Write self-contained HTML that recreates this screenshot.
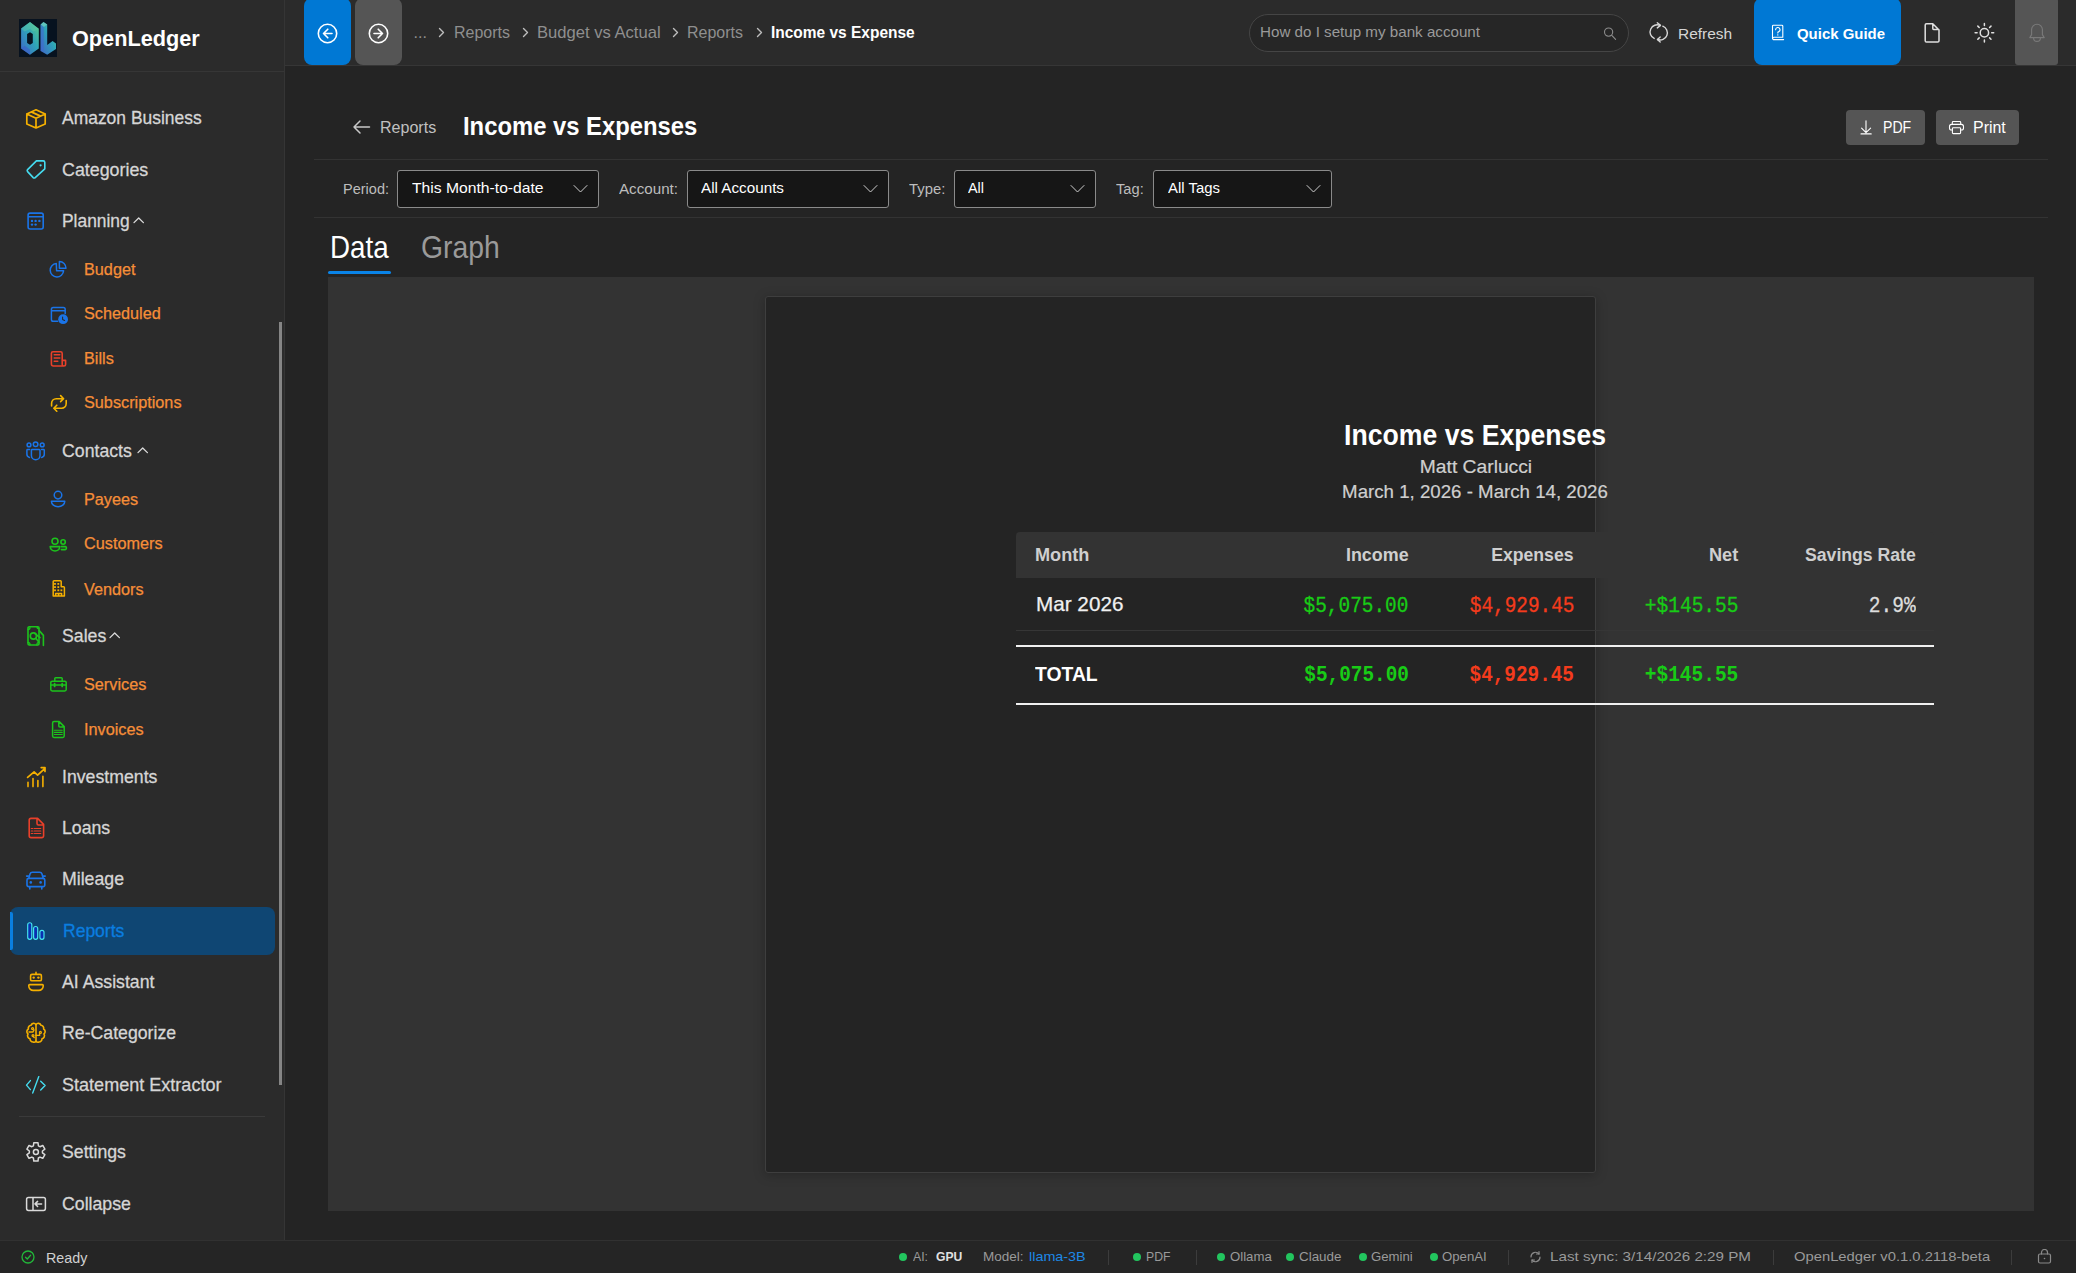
<!DOCTYPE html>
<html><head><meta charset="utf-8"><style>
html,body{margin:0;padding:0;width:2076px;height:1273px;overflow:hidden;background:#242424}
.t{position:absolute;white-space:nowrap}
svg{display:block}
</style></head><body>
<div style="position:absolute;left:0px;top:0px;width:2076px;height:1273px;background:#242424"></div>
<div style="position:absolute;left:0px;top:0px;width:284px;height:1240px;background:#2b2b2b"></div>
<div style="position:absolute;left:284px;top:0px;width:1px;height:1240px;background:#353535"></div>
<div style="position:absolute;left:0px;top:71px;width:284px;height:1px;background:#363636"></div>
<div style="position:absolute;left:285px;top:0px;width:1791px;height:65px;background:#2b2b2b"></div>
<div style="position:absolute;left:285px;top:65px;width:1791px;height:1px;background:#363636"></div>
<div style="position:absolute;left:0px;top:1240px;width:2076px;height:33px;background:#252525"></div>
<div style="position:absolute;left:0px;top:1240px;width:2076px;height:1px;background:#313131"></div>
<svg style="position:absolute;left:19px;top:19px;" width="38" height="38" viewBox="19 19 38 38" fill="none" stroke-linecap="round" stroke-linejoin="round"><rect x="19" y="19" width="38" height="38" fill="#07121f"/>
<defs><linearGradient id="lg" x1="0" y1="1" x2="1" y2="0"><stop offset="0" stop-color="#3f64c8"/><stop offset="0.55" stop-color="#2ea3b8"/><stop offset="1" stop-color="#5ad08a"/></linearGradient></defs>
<path d="M30 22.1 L38.8 28.7 L38.8 48.5 L30 54.8 L21.1 48.5 L21.1 28.4 Z M30 32.2 L32.8 34 L32.8 43 L30 44.7 L27.1 43 L27.1 34 Z" fill="url(#lg)" fill-rule="evenodd"/>
<path d="M21.1 28.4 L30 22.1 L38.8 28.7 L33.5 31.5 L30 29 L24.6 31.5 Z" fill="#5fc9a8" opacity="0.45"/>
<path d="M21.1 48.5 L24.6 45.8 L30 49.5 L30 54.8 Z" fill="#3a5fc8" opacity="0.6"/>
<path d="M43.5 22.1 L47.2 24.6 L47.2 45 L52.6 41 L56 43.5 L56 49.1 L47.2 54.8 L40.6 51 L40.6 24.6 Z" fill="url(#lg)"/>
<path d="M40.6 24.6 L43.5 22.1 L47.2 24.6 L43.8 27 Z" fill="#7fd8c0" opacity="0.6"/>
<path d="M40.6 24.6 L43.8 27 L43.8 50 L40.6 51 Z" fill="#3f6ad0" opacity="0.55"/>
</svg>
<div class="t" style="left:72.1px;top:23.74px;font:700 22.53px/29.29px 'Liberation Sans', sans-serif;color:#ffffff;transform:scaleX(0.9630);transform-origin:left">OpenLedger</div>
<div class="t" style="left:62.3px;top:106.02px;font:400 19.04px/24.75px 'Liberation Sans', sans-serif;color:#d6d6d6;-webkit-text-stroke:0.3px #d6d6d6;transform:scaleX(0.9171);transform-origin:left">Amazon Business</div>
<div class="t" style="left:62.3px;top:158.02px;font:400 19.04px/24.75px 'Liberation Sans', sans-serif;color:#d6d6d6;-webkit-text-stroke:0.3px #d6d6d6;transform:scaleX(0.9376);transform-origin:left">Categories</div>
<div class="t" style="left:62.3px;top:209.02px;font:400 19.04px/24.75px 'Liberation Sans', sans-serif;color:#d6d6d6;-webkit-text-stroke:0.3px #d6d6d6;transform:scaleX(0.9139);transform-origin:left">Planning</div>
<div class="t" style="left:62.3px;top:439.02px;font:400 19.04px/24.75px 'Liberation Sans', sans-serif;color:#d6d6d6;-webkit-text-stroke:0.3px #d6d6d6;transform:scaleX(0.93);transform-origin:left">Contacts</div>
<div class="t" style="left:62.3px;top:624.02px;font:400 19.04px/24.75px 'Liberation Sans', sans-serif;color:#d6d6d6;-webkit-text-stroke:0.3px #d6d6d6;transform:scaleX(0.93);transform-origin:left">Sales</div>
<div class="t" style="left:62.3px;top:765.02px;font:400 19.04px/24.75px 'Liberation Sans', sans-serif;color:#d6d6d6;-webkit-text-stroke:0.3px #d6d6d6;transform:scaleX(0.93);transform-origin:left">Investments</div>
<div class="t" style="left:62.3px;top:816.02px;font:400 19.04px/24.75px 'Liberation Sans', sans-serif;color:#d6d6d6;-webkit-text-stroke:0.3px #d6d6d6;transform:scaleX(0.93);transform-origin:left">Loans</div>
<div class="t" style="left:62.3px;top:867.02px;font:400 19.04px/24.75px 'Liberation Sans', sans-serif;color:#d6d6d6;-webkit-text-stroke:0.3px #d6d6d6;transform:scaleX(0.93);transform-origin:left">Mileage</div>
<div class="t" style="left:62.3px;top:970.02px;font:400 19.04px/24.75px 'Liberation Sans', sans-serif;color:#d6d6d6;-webkit-text-stroke:0.3px #d6d6d6;transform:scaleX(0.93);transform-origin:left">AI Assistant</div>
<div class="t" style="left:62.3px;top:1021.32px;font:400 19.04px/24.75px 'Liberation Sans', sans-serif;color:#d6d6d6;-webkit-text-stroke:0.3px #d6d6d6;transform:scaleX(0.93);transform-origin:left">Re-Categorize</div>
<div class="t" style="left:62.3px;top:1073.02px;font:400 19.04px/24.75px 'Liberation Sans', sans-serif;color:#d6d6d6;-webkit-text-stroke:0.3px #d6d6d6;transform:scaleX(0.9483);transform-origin:left">Statement Extractor</div>
<div class="t" style="left:62.3px;top:1140.02px;font:400 19.04px/24.75px 'Liberation Sans', sans-serif;color:#d6d6d6;-webkit-text-stroke:0.3px #d6d6d6;transform:scaleX(0.93);transform-origin:left">Settings</div>
<div class="t" style="left:62.3px;top:1192.02px;font:400 19.04px/24.75px 'Liberation Sans', sans-serif;color:#d6d6d6;-webkit-text-stroke:0.3px #d6d6d6;transform:scaleX(0.93);transform-origin:left">Collapse</div>
<svg style="position:absolute;left:131.5px;top:216.3px;" width="14" height="9" viewBox="131.5 216.3 14 9" fill="none" stroke-linecap="round" stroke-linejoin="round"><path d="M133.5 222.9 L138.2 218.3 L142.9 222.9" stroke="#dcdcdc" stroke-width="1.3" fill="none"/></svg>
<svg style="position:absolute;left:136.2px;top:446.1px;" width="14" height="9" viewBox="136.2 446.1 14 9" fill="none" stroke-linecap="round" stroke-linejoin="round"><path d="M138.2 452.70000000000005 L142.89999999999998 448.1 L147.6 452.70000000000005" stroke="#dcdcdc" stroke-width="1.3" fill="none"/></svg>
<svg style="position:absolute;left:107.5px;top:631.3px;" width="14" height="9" viewBox="107.5 631.3 14 9" fill="none" stroke-linecap="round" stroke-linejoin="round"><path d="M109.5 637.9 L114.2 633.3 L118.9 637.9" stroke="#dcdcdc" stroke-width="1.3" fill="none"/></svg>
<div class="t" style="left:83.7px;top:258.63px;font:400 16.42px/21.35px 'Liberation Sans', sans-serif;color:#f68e38;-webkit-text-stroke:0.25px #f68e38;transform:scaleX(0.99);transform-origin:left">Budget</div>
<div class="t" style="left:83.7px;top:303.43px;font:400 16.42px/21.35px 'Liberation Sans', sans-serif;color:#f68e38;-webkit-text-stroke:0.25px #f68e38;transform:scaleX(0.99);transform-origin:left">Scheduled</div>
<div class="t" style="left:83.7px;top:348.13px;font:400 16.42px/21.35px 'Liberation Sans', sans-serif;color:#f68e38;-webkit-text-stroke:0.25px #f68e38;transform:scaleX(0.99);transform-origin:left">Bills</div>
<div class="t" style="left:83.7px;top:392.23px;font:400 16.42px/21.35px 'Liberation Sans', sans-serif;color:#f68e38;-webkit-text-stroke:0.25px #f68e38;transform:scaleX(0.99);transform-origin:left">Subscriptions</div>
<div class="t" style="left:83.7px;top:489.23px;font:400 16.42px/21.35px 'Liberation Sans', sans-serif;color:#f68e38;-webkit-text-stroke:0.25px #f68e38;transform:scaleX(0.99);transform-origin:left">Payees</div>
<div class="t" style="left:83.7px;top:533.43px;font:400 16.42px/21.35px 'Liberation Sans', sans-serif;color:#f68e38;-webkit-text-stroke:0.25px #f68e38;transform:scaleX(0.99);transform-origin:left">Customers</div>
<div class="t" style="left:83.7px;top:578.63px;font:400 16.42px/21.35px 'Liberation Sans', sans-serif;color:#f68e38;-webkit-text-stroke:0.25px #f68e38;transform:scaleX(0.99);transform-origin:left">Vendors</div>
<div class="t" style="left:83.7px;top:673.63px;font:400 16.42px/21.35px 'Liberation Sans', sans-serif;color:#f68e38;-webkit-text-stroke:0.25px #f68e38;transform:scaleX(0.99);transform-origin:left">Services</div>
<div class="t" style="left:83.7px;top:719.23px;font:400 16.42px/21.35px 'Liberation Sans', sans-serif;color:#f68e38;-webkit-text-stroke:0.25px #f68e38;transform:scaleX(0.99);transform-origin:left">Invoices</div>
<div style="position:absolute;left:10px;top:907px;width:265px;height:48px;background:#0f4673;border-radius:8px"></div>
<div style="position:absolute;left:10px;top:912px;width:3px;height:38px;background:#0a7fe0;border-radius:0 2px 2px 0"></div>
<div class="t" style="left:62.5px;top:919.02px;font:400 19.04px/24.75px 'Liberation Sans', sans-serif;color:#0a7ee0;-webkit-text-stroke:0.3px #0a7ee0;transform:scaleX(0.9199);transform-origin:left">Reports</div>
<div style="position:absolute;left:19px;top:1116px;width:246px;height:1px;background:#3a3a3a"></div>
<div style="position:absolute;left:279px;top:322px;width:3px;height:763px;background:#858585"></div>
<svg style="position:absolute;left:0px;top:0px;" width="285" height="1240" viewBox="0 0 285 1240" fill="none" stroke-linecap="round" stroke-linejoin="round"><path d="M36 109.8 L45.2 114 L45.2 124 L36 128 L26.8 124 L26.8 114 Z M26.8 114 L36 118.3 L45.2 114 M36 118.3 V128 M31.2 111.9 L40.6 116.1" stroke="#f5b000" stroke-width="1.7" fill="none"/><path d="M36.4 160.9 H43.2 a1.6 1.6 0 0 1 1.6 1.6 V168.8 L35.2 177.6 a1.4 1.4 0 0 1 -2 0 L27.6 171.6 a1.4 1.4 0 0 1 0 -2 Z" stroke="#45dcf0" stroke-width="1.6" fill="none"/><circle cx="40.6" cy="165.3" r="1.1" stroke="none" fill="#45dcf0"/><path d="M30.1 213.1 H41.2 a2 2 0 0 1 2 2 V227 a2 2 0 0 1 -2 2 H30.1 a2 2 0 0 1 -2 -2 V215.1 a2 2 0 0 1 2 -2 Z M28.1 216.8 H43.2" stroke="#1a74e8" stroke-width="1.6" fill="none"/><circle cx="32" cy="220.9" r="1.2" stroke="none" fill="#1a74e8"/><circle cx="35.6" cy="220.9" r="1.2" stroke="none" fill="#1a74e8"/><circle cx="39.4" cy="220.9" r="1.2" stroke="none" fill="#1a74e8"/><circle cx="32" cy="224.6" r="1.2" stroke="none" fill="#1a74e8"/><circle cx="35.6" cy="224.6" r="1.2" stroke="none" fill="#1a74e8"/><circle cx="35.6" cy="444.3" r="2.3" stroke="#1a74e8" stroke-width="1.5" fill="none"/><circle cx="29" cy="444.9" r="1.9" stroke="#1a74e8" stroke-width="1.5" fill="none"/><circle cx="42.2" cy="444.9" r="1.9" stroke="#1a74e8" stroke-width="1.5" fill="none"/><path d="M32 449.6 H39.2 a0.8 0.8 0 0 1 0.8 0.8 V455.5 a4.3 4.3 0 0 1 -8.6 0 V450.4 a0.8 0.8 0 0 1 0.6 -0.8 Z" stroke="#1a74e8" stroke-width="1.5" fill="none"/><path d="M29.6 449.6 H27.6 a0.7 0.7 0 0 0 -0.7 0.7 V454.3 a3.2 3.2 0 0 0 2.6 3.1" stroke="#1a74e8" stroke-width="1.5" fill="none"/><path d="M41.6 449.6 H43.6 a0.7 0.7 0 0 1 0.7 0.7 V454.3 a3.2 3.2 0 0 1 -2.6 3.1" stroke="#1a74e8" stroke-width="1.5" fill="none"/><path d="M29.2 626.8 H37.8 a1.2 1.2 0 0 1 1.2 1.2 V643.8 a1.2 1.2 0 0 1 -1.2 1.2 H29.2 a1.2 1.2 0 0 1 -1.2 -1.2 V628 a1.2 1.2 0 0 1 1.2 -1.2 Z" stroke="#1cc41c" stroke-width="1.6" fill="none"/><path d="M28 629.6 a2 2 0 0 0 2 -2 M37 626.8 a2 2 0 0 0 2 2 M28 642.4 a2 2 0 0 1 2 2.4 M37 645 a2 2 0 0 1 2 -2.6" stroke="#1cc41c" stroke-width="1.3" fill="none"/><circle cx="33.4" cy="636" r="3.1" stroke="#1cc41c" stroke-width="1.6" fill="none"/><path d="M39.2 630.6 L43.4 635.4 V645.4" stroke="#1cc41c" stroke-width="1.6" fill="none"/><path d="M34.6 633.4 L40 637.6 M36.2 638.8 L38.6 641.8" stroke="#1cc41c" stroke-width="1.6" fill="none"/><path d="M27.6 777.4 L34.1 771.8 L37.6 775.2 L44.4 768.8 M41.2 767.6 H45 V771.4" stroke="#f5b000" stroke-width="1.7" fill="none"/><path d="M28 782.2 V786.6 M33 778.6 V786.6 M37.9 780.6 V786.6 M42.9 776.2 V786.6" stroke="#f5b000" stroke-width="1.6" fill="none"/><path d="M31 818.4 H37.6 L43.6 824.4 V835.8 a1.8 1.8 0 0 1 -1.8 1.8 H31 a1.8 1.8 0 0 1 -1.8 -1.8 V820.2 a1.8 1.8 0 0 1 1.8 -1.8 Z M37 818.6 V823.6 a1.4 1.4 0 0 0 1.4 1.4 H43.4" stroke="#e8402a" stroke-width="1.6" fill="none"/><path d="M31.2 828.5 H32.8 M34.2 828.5 H40.8 M31.2 831 H32.8 M34.2 831 H40.8 M31.2 833.5 H32.8 M34.2 833.5 H40.8" stroke="#e8402a" stroke-width="1.1" fill="none"/><path d="M28.8 878.4 L30 874 a2.6 2.6 0 0 1 2.4 -1.8 H39.6 a2.6 2.6 0 0 1 2.4 1.8 L43.2 878.4" stroke="#1a74e8" stroke-width="1.6" fill="none"/><path d="M28.6 878.4 H43.2 a1.6 1.6 0 0 1 1.6 1.6 V885 a1.6 1.6 0 0 1 -1.6 1.6 H28.6 a1.6 1.6 0 0 1 -1.6 -1.6 V880 a1.6 1.6 0 0 1 1.6 -1.6 Z" stroke="#1a74e8" stroke-width="1.6" fill="none"/><path d="M26.6 876.1 H28.4 M43.4 876.1 H45.2 M29.8 886.8 V889 M41.8 886.8 V889" stroke="#1a74e8" stroke-width="1.6" fill="none"/><circle cx="30.8" cy="882.4" r="1.3" stroke="none" fill="#1a74e8"/><circle cx="40.6" cy="882.4" r="1.3" stroke="none" fill="#1a74e8"/><g stroke="#45e6f0" stroke-width="1.15" fill="#0a2fb0"><rect x="27.7" y="922.7" width="4.1" height="16.6" rx="2.05"/><rect x="33.6" y="926.5" width="4.1" height="12.8" rx="2.05"/><rect x="39.9" y="930.3" width="4.1" height="9" rx="2.05"/></g><path d="M32 974.4 H40 a1.4 1.4 0 0 1 1.4 1.4 V979.4 a1.4 1.4 0 0 1 -1.4 1.4 H32 a1.4 1.4 0 0 1 -1.4 -1.4 V975.8 a1.4 1.4 0 0 1 1.4 -1.4 Z M36 972.4 V974.4" stroke="#f5b000" stroke-width="1.6" fill="none"/><circle cx="33.7" cy="977.6" r="1.2" stroke="none" fill="#f5b000"/><circle cx="38.4" cy="977.6" r="1.2" stroke="none" fill="#f5b000"/><path d="M29.6 984.6 H42.4 a0.8 0.8 0 0 1 0.8 0.8 V986 a4.4 4.4 0 0 1 -4.4 4.4 H33.2 a4.4 4.4 0 0 1 -4.4 -4.4 V985.4 a0.8 0.8 0 0 1 0.8 -0.8 Z" stroke="#f5b000" stroke-width="1.6" fill="none"/><path d="M36 1024.6 V1041.6 M36 1024.6 a2.8 2.8 0 0 0 -5 0.6 a3 3 0 0 0 -2.6 3.8 a3 3 0 0 0 -0.4 5 a3.2 3.2 0 0 0 2 4.8 a3 3 0 0 0 3 3.2 a2.6 2.6 0 0 0 3 -0.8" stroke="#f5b000" stroke-width="1.6" fill="none"/><path d="M36 1024.6 a2.8 2.8 0 0 1 5 0.6 a3 3 0 0 1 2.6 3.8 a3 3 0 0 1 0.4 5 a3.2 3.2 0 0 1 -2 4.8 a3 3 0 0 1 -3 3.2 a2.6 2.6 0 0 1 -3 -0.8" stroke="#f5b000" stroke-width="1.6" fill="none"/><path d="M29 1032 H33 L34 1030 M36 1035.4 H39.6 V1033.8 M32.8 1036 L34.2 1037.6" stroke="#f5b000" stroke-width="1.4" fill="none"/><circle cx="32.6" cy="1028.6" r="1" stroke="#f5b000" stroke-width="1.2" fill="none"/><circle cx="40.4" cy="1032.4" r="1" stroke="#f5b000" stroke-width="1.2" fill="none"/><circle cx="33" cy="1035.6" r="1" stroke="#f5b000" stroke-width="1.2" fill="none"/><path d="M30.4 1080.6 L26.5 1085.1 L30.4 1089.6 M40.7 1081.3 L45.1 1085.6 L40.7 1090 M38.8 1076.6 L32.7 1093" stroke="#45dcf0" stroke-width="1.4" fill="none"/><path d="M33.79 1142.74 L38.01 1142.74 L38.37 1145.78 L39.96 1146.70 L42.77 1145.49 L44.89 1149.15 L42.44 1150.98 L42.44 1152.82 L44.89 1154.65 L42.77 1158.31 L39.96 1157.10 L38.37 1158.02 L38.01 1161.06 L33.79 1161.06 L33.43 1158.02 L31.84 1157.10 L29.03 1158.31 L26.91 1154.65 L29.36 1152.82 L29.36 1150.98 L26.91 1149.15 L29.03 1145.49 L31.84 1146.70 L33.43 1145.78 Z" stroke="#dadada" stroke-width="1.5" fill="none"/><circle cx="35.9" cy="1151.9" r="2.5" stroke="#dadada" stroke-width="1.5" fill="none"/><path d="M28.4 1197.4 H43.6 a1.8 1.8 0 0 1 1.8 1.8 V1208.6 a1.8 1.8 0 0 1 -1.8 1.8 H28.4 a1.8 1.8 0 0 1 -1.8 -1.8 V1199.2 a1.8 1.8 0 0 1 1.8 -1.8 Z M33 1197.4 V1210.4" stroke="#dadada" stroke-width="1.5" fill="none"/><path d="M37.6 1201.4 L35 1203.9 L37.6 1206.5 M35.2 1203.9 H41.6" stroke="#dadada" stroke-width="1.5" fill="none"/><path d="M56.3 263.6 a6.7 6.7 0 1 0 7.3 7.2 H56.6 Z" stroke="#1a74e8" stroke-width="1.5" fill="none"/><path d="M59.4 261.6 V268.3 H66 a6.7 6.7 0 0 0 -6.6 -6.7 Z" stroke="#1a74e8" stroke-width="1.5" fill="none"/><path d="M65.2 313.6 V309.4 a1.8 1.8 0 0 0 -1.8 -1.8 H53.2 a1.8 1.8 0 0 0 -1.8 1.8 V319.4 a1.8 1.8 0 0 0 1.8 1.8 H57.6 M51.4 310.8 H65.2" stroke="#1a74e8" stroke-width="1.5" fill="none"/><circle cx="63.1" cy="319.2" r="4.9" stroke="none" fill="#1a74e8"/><path d="M62.6 317 V319.4 L64.6 320.4" stroke="#2b2b2b" stroke-width="1.1" fill="none"/><path d="M63.2 360.4 H65.6 V364.4 a1.6 1.6 0 0 1 -1.6 1.6 H53.4 a2 2 0 0 1 -2 -2 V353.4 a1.6 1.6 0 0 1 1.6 -1.6 H60.6 a1.6 1.6 0 0 1 1.6 1.6 V364.4 a1.6 1.6 0 0 0 1.6 1.6" stroke="#e8402a" stroke-width="1.6" fill="none"/><path d="M54.2 354.8 H59.8 M54.2 358 H59.8 M54.2 361.2 H57.8" stroke="#e8402a" stroke-width="1.5" fill="none"/><path d="M63.4 398.7 H56.2 a4.6 4.6 0 0 0 -4.6 4.6 V406 M60.6 395.6 L63.6 398.7 L60.6 401.6" stroke="#f5b400" stroke-width="1.6" fill="none"/><path d="M54 408.2 H61.6 a4.6 4.6 0 0 0 4.6 -4.6 V400.6 M56.8 405.2 L53.8 408.2 L56.8 411.2" stroke="#f5b400" stroke-width="1.6" fill="none"/><circle cx="58" cy="495.1" r="3.8" stroke="#1a74e8" stroke-width="1.5" fill="none"/><path d="M51.4 501.2 H64.8 a6.7 5.6 0 0 1 -13.4 0 Z" stroke="#1a74e8" stroke-width="1.5" fill="none"/><circle cx="55" cy="541.2" r="3" stroke="#1cc41c" stroke-width="1.6" fill="none"/><circle cx="63.1" cy="542" r="2.2" stroke="#1cc41c" stroke-width="1.6" fill="none"/><path d="M50.2 546.6 H59.8 a4.8 4.4 0 0 1 -9.6 0 Z" stroke="#1cc41c" stroke-width="1.6" fill="none"/><path d="M61.4 546.6 H65.4 a1.6 1.6 0 0 1 0 3 L64.2 549.6 H61.4" stroke="#1cc41c" stroke-width="1.6" fill="none"/><path d="M53.2 596 V581.6 a0.8 0.8 0 0 1 0.8 -0.8 H60.4 a0.8 0.8 0 0 1 0.8 0.8 V586.8 H63.6 a0.8 0.8 0 0 1 0.8 0.8 V596 Z M55.6 596 V593.4 H61.6 V596 M58.6 593.4 V596" stroke="#f5b000" stroke-width="1.5" fill="none"/><rect x="54.1" y="583.0" width="1.8" height="1.8" fill="#f5b000"/><rect x="57.4" y="583.0" width="1.8" height="1.8" fill="#f5b000"/><rect x="54.1" y="586.2" width="1.8" height="1.8" fill="#f5b000"/><rect x="57.4" y="586.2" width="1.8" height="1.8" fill="#f5b000"/><rect x="54.1" y="589.4" width="1.8" height="1.8" fill="#f5b000"/><rect x="57.4" y="589.4" width="1.8" height="1.8" fill="#f5b000"/><rect x="60.5" y="589.4" width="1.8" height="1.8" fill="#f5b000"/><path d="M52.2 681.2 H64.8 a1.4 1.4 0 0 1 1.4 1.4 V689.6 a1.4 1.4 0 0 1 -1.4 1.4 H52.2 a1.4 1.4 0 0 1 -1.4 -1.4 V682.6 a1.4 1.4 0 0 1 1.4 -1.4 Z M54.8 681.2 V678.6 a0.8 0.8 0 0 1 0.8 -0.8 H61.4 a0.8 0.8 0 0 1 0.8 0.8 V681.2 M50.8 685 H66.2" stroke="#1cc41c" stroke-width="1.5" fill="none"/><path d="M54.6 683.6 V686.4 M62.2 683.6 V686.4" stroke="#1cc41c" stroke-width="1.8" fill="none"/><path d="M54 721.6 H59.2 L64.2 726.6 V736 a1.4 1.4 0 0 1 -1.4 1.4 H54 a1.4 1.4 0 0 1 -1.4 -1.4 V723 a1.4 1.4 0 0 1 1.4 -1.4 Z M58.8 721.8 V726 a1 1 0 0 0 1 1 H64" stroke="#1cc41c" stroke-width="1.5" fill="none"/><path d="M54.4 730.3 H62.2 M54.4 732.4 H62.2 M54.4 734.5 H62.2" stroke="#1cc41c" stroke-width="1.1" fill="none"/></svg>
<svg style="position:absolute;left:21px;top:1250px;" width="14" height="14" viewBox="0 0 14 14" fill="none" stroke-linecap="round" stroke-linejoin="round"><circle cx="7" cy="7" r="6" stroke="#22b83a" stroke-width="1.3"/><path d="M4.5 7.2 L6.3 9 L9.6 5.3" stroke="#22b83a" stroke-width="1.3"/></svg>
<div class="t" style="left:45.7px;top:1248.52px;font:400 14.53px/18.89px 'Liberation Sans', sans-serif;color:#d0d0d0;transform:scaleX(0.9841);transform-origin:left">Ready</div>
<div style="position:absolute;left:304px;top:-2px;width:47px;height:67px;background:#0078d4;border-radius:8px"></div>
<div style="position:absolute;left:355px;top:-2px;width:47px;height:67px;background:#555555;border-radius:8px"></div>
<svg style="position:absolute;left:317px;top:23px;" width="21" height="21" viewBox="0 0 21 21" fill="none" stroke-linecap="round" stroke-linejoin="round"><circle cx="10.5" cy="10.5" r="9.2" stroke="#fff" stroke-width="1.6"/><path d="M10.8 6.2 L6.5 10.5 L10.8 14.8 M6.5 10.5 H15" stroke="#fff" stroke-width="1.6"/></svg>
<svg style="position:absolute;left:368px;top:23px;" width="21" height="21" viewBox="0 0 21 21" fill="none" stroke-linecap="round" stroke-linejoin="round"><circle cx="10.5" cy="10.5" r="9.2" stroke="#fff" stroke-width="1.6"/><path d="M10.2 6.2 L14.5 10.5 L10.2 14.8 M14.5 10.5 H6" stroke="#fff" stroke-width="1.6"/></svg>
<div class="t" style="left:413.5px;top:22.95px;font:400 16px/20.8px 'Liberation Sans', sans-serif;color:#8f8f8f;;transform-origin:left">...</div>
<svg style="position:absolute;left:438px;top:27px;" width="7" height="11" viewBox="0 0 7 11" fill="none" stroke-linecap="round" stroke-linejoin="round"><path d="M1.5 1.5 L5.5 5.5 L1.5 9.5" stroke="#bdbdbd" stroke-width="1.4"/></svg>
<svg style="position:absolute;left:521.7px;top:27px;" width="7" height="11" viewBox="0 0 7 11" fill="none" stroke-linecap="round" stroke-linejoin="round"><path d="M1.5 1.5 L5.5 5.5 L1.5 9.5" stroke="#bdbdbd" stroke-width="1.4"/></svg>
<svg style="position:absolute;left:671.7px;top:27px;" width="7" height="11" viewBox="0 0 7 11" fill="none" stroke-linecap="round" stroke-linejoin="round"><path d="M1.5 1.5 L5.5 5.5 L1.5 9.5" stroke="#bdbdbd" stroke-width="1.4"/></svg>
<svg style="position:absolute;left:756px;top:27px;" width="7" height="11" viewBox="0 0 7 11" fill="none" stroke-linecap="round" stroke-linejoin="round"><path d="M1.5 1.5 L5.5 5.5 L1.5 9.5" stroke="#bdbdbd" stroke-width="1.4"/></svg>
<div class="t" style="left:453.9px;top:22.96px;font:400 15.99px/20.79px 'Liberation Sans', sans-serif;color:#8f8f8f;transform:scaleX(1.0003);transform-origin:left">Reports</div>
<div class="t" style="left:537px;top:22.96px;font:400 15.99px/20.79px 'Liberation Sans', sans-serif;color:#8f8f8f;transform:scaleX(1.0380);transform-origin:left">Budget vs Actual</div>
<div class="t" style="left:687.3px;top:22.96px;font:400 15.99px/20.79px 'Liberation Sans', sans-serif;color:#8f8f8f;transform:scaleX(1.0003);transform-origin:left">Reports</div>
<div class="t" style="left:770.6px;top:22.96px;font:700 15.99px/20.79px 'Liberation Sans', sans-serif;color:#ffffff;transform:scaleX(0.9685);transform-origin:left">Income vs Expense</div>
<div style="position:absolute;left:1249px;top:14px;width:380px;height:38px;box-sizing:border-box;border:1px solid #454545;border-radius:19px;background:#262626"></div>
<div class="t" style="left:1260.4px;top:21.83px;font:400 15.12px/19.66px 'Liberation Sans', sans-serif;color:#9a9a9a;transform:scaleX(1.0036);transform-origin:left">How do I setup my bank account</div>
<svg style="position:absolute;left:1598px;top:24px;" width="22" height="20" viewBox="1598 24 22 20" fill="none" stroke-linecap="round" stroke-linejoin="round"><g fill="none" stroke="#8c8c8c" stroke-width="1.1"><circle cx="1608.6" cy="32.1" r="4.1"/><path d="M1611.8 35.4 L1615.6 39.3"/></g></svg>
<svg style="position:absolute;left:1640px;top:15px;" width="40" height="35" viewBox="1640 15 40 35" fill="none" stroke-linecap="round" stroke-linejoin="round"><g stroke="#d8d8d8" stroke-width="1.4" fill="none"><path d="M1654.2 38.4 A7 7 0 0 1 1660.2 25.5"/><path d="M1657.3 22.7 L1660.5 25.4 L1657.3 27.9"/><path d="M1662.8 26.2 A7 7 0 0 1 1657.6 39.5"/><path d="M1660.2 36.9 L1657.4 39.6 L1660.2 42.1"/></g></svg>
<div class="t" style="left:1677.8px;top:24.44px;font:400 15.41px/20.03px 'Liberation Sans', sans-serif;color:#d5d5d5;transform:scaleX(1.0046);transform-origin:left">Refresh</div>
<div style="position:absolute;left:1754px;top:-2px;width:147px;height:67px;background:#0078d4;border-radius:8px"></div>
<svg style="position:absolute;left:1768px;top:22px;" width="20" height="20" viewBox="1768 22 20 20" fill="none" stroke-linecap="round" stroke-linejoin="round"><g fill="none" stroke="#fff" stroke-width="1.1"><path d="M1772.5 38.6 V26.1 a0.9 0.9 0 0 1 0.9 -0.9 H1781.9 a0.9 0.9 0 0 1 0.9 0.9 V37.3 H1773.8 a1.15 1.15 0 0 0 0 2.3 H1783.6"/><path d="M1775.6 29.7 a2.2 2.2 0 1 1 3.3 1.9 a1.3 1.3 0 0 0 -1.1 1.2 V33"/></g><circle cx="1777.8" cy="34.9" r="0.7" fill="#fff"/></svg>
<div class="t" style="left:1797.4px;top:23.64px;font:700 15.41px/20.03px 'Liberation Sans', sans-serif;color:#ffffff;transform:scaleX(0.9697);transform-origin:left">Quick Guide</div>
<svg style="position:absolute;left:1915px;top:15px;" width="140" height="35" viewBox="1915 15 140 35" fill="none" stroke-linecap="round" stroke-linejoin="round"><g fill="none" stroke-width="1.5" stroke-linejoin="round">
<path d="M1926.5 23.8 H1932.8 L1939 30 V40.8 a1.3 1.3 0 0 1 -1.3 1.3 H1926.5 a1.3 1.3 0 0 1 -1.3 -1.3 V25.1 a1.3 1.3 0 0 1 1.3 -1.3 Z M1932.8 24 V28.6 a0.8 0.8 0 0 0 0.8 0.8 H1938.8" stroke="#e0e0e0"/>
<circle cx="1984.4" cy="32.7" r="4.2" stroke="#e0e0e0"/>
<path d="M1984.4 23.4 V25.4 M1984.4 40 V42 M1975.1 32.7 H1977.1 M1991.7 32.7 H1993.7 M1977.8 26.1 L1979.2 27.5 M1989.6 37.9 L1991 39.3 M1977.8 39.3 L1979.2 37.9 M1989.6 27.5 L1991 26.1" stroke="#e0e0e0"/>
</g></svg>
<div style="position:absolute;left:2015px;top:-2px;width:43px;height:67px;background:#555555;border-radius:3px"></div>
<svg style="position:absolute;left:2020px;top:15px;" width="35" height="35" viewBox="2020 15 35 35" fill="none" stroke-linecap="round" stroke-linejoin="round"><g fill="none" stroke="#7a7a7a" stroke-width="1.1">
<path d="M2029.8 37.6 L2031.6 34.6 V29.6 a5.4 5.4 0 0 1 10.8 0 V34.6 L2044.2 37.6 Z"/>
<path d="M2033.6 38 a3.4 3.4 0 0 0 6.8 0"/>
</g></svg>
<svg style="position:absolute;left:352px;top:119px;" width="19" height="16" viewBox="0 0 19 16" fill="none" stroke-linecap="round" stroke-linejoin="round"><path d="M8 2 L2 8 L8 14 M2 8 H17.5" stroke="#c8c8c8" stroke-width="1.5"/></svg>
<div class="t" style="left:379.7px;top:118.16px;font:400 15.99px/20.79px 'Liberation Sans', sans-serif;color:#c0c0c0;transform:scaleX(1.0039);transform-origin:left">Reports</div>
<div class="t" style="left:462.5px;top:110.32px;font:700 25.87px/33.63px 'Liberation Sans', sans-serif;color:#ffffff;transform:scaleX(0.9209);transform-origin:left">Income vs Expenses</div>
<div style="position:absolute;left:1846px;top:110px;width:79px;height:35px;background:#555555;border-radius:4px"></div>
<svg style="position:absolute;left:1855px;top:115px;" width="20" height="22" viewBox="1855 115 20 22" fill="none" stroke-linecap="round" stroke-linejoin="round"><g fill="none" stroke="#fff" stroke-width="1.1"><path d="M1866 120.8 V132.3 M1861.6 128.2 L1866 132.6 L1870.6 128.2 M1861 133.9 H1871.2"/></g></svg>
<div class="t" style="left:1882.8px;top:118.25px;font:400 15.7px/20.41px 'Liberation Sans', sans-serif;color:#ffffff;transform:scaleX(0.8988);transform-origin:left">PDF</div>
<div style="position:absolute;left:1936px;top:110px;width:83px;height:35px;background:#555555;border-radius:4px"></div>
<svg style="position:absolute;left:1945px;top:115px;" width="22" height="22" viewBox="1945 115 22 22" fill="none" stroke-linecap="round" stroke-linejoin="round"><g fill="none" stroke="#fff" stroke-width="1.1"><path d="M1952.3 124.4 V122.4 a0.9 0.9 0 0 1 0.9 -0.9 H1959.8 a0.9 0.9 0 0 1 0.9 0.9 V124.4"/><path d="M1952.4 130 H1951.6 a2.1 2.1 0 0 1 -2.1 -2.1 V126.5 a2.1 2.1 0 0 1 2.1 -2.1 H1961.4 a2.1 2.1 0 0 1 2.1 2.1 V127.9 a2.1 2.1 0 0 1 -2.1 2.1 H1960.6"/><rect x="1952.4" y="127.7" width="8.2" height="5.9" rx="0.9"/></g></svg>
<div class="t" style="left:1972.8px;top:118.25px;font:400 15.7px/20.41px 'Liberation Sans', sans-serif;color:#ffffff;transform:scaleX(1.0166);transform-origin:left">Print</div>
<div style="position:absolute;left:314px;top:159px;width:1734px;height:1px;background:#333333"></div>
<div style="position:absolute;left:314px;top:217px;width:1734px;height:1px;background:#333333"></div>
<div class="t" style="left:342.6px;top:179.71px;font:400 14.24px/18.51px 'Liberation Sans', sans-serif;color:#bdbdbd;transform:scaleX(1.0197);transform-origin:left">Period:</div>
<div style="position:absolute;left:397px;top:170px;width:202px;height:38px;box-sizing:border-box;border:1px solid #8a8a8a;border-radius:3px;background:#161616"></div>
<div class="t" style="left:411.8px;top:177.60px;font:400 15.55px/20.21px 'Liberation Sans', sans-serif;color:#ffffff;transform:scaleX(1.0085);transform-origin:left">This Month-to-date</div>
<svg style="position:absolute;left:573px;top:184px;" width="15" height="10" viewBox="0 0 15 10" fill="none" stroke-linecap="round" stroke-linejoin="round"><path d="M1 1.5 L7.5 8 L14 1.5" stroke="#cfcfcf" stroke-width="1.0"/></svg>
<div class="t" style="left:618.6px;top:179.71px;font:400 14.24px/18.51px 'Liberation Sans', sans-serif;color:#bdbdbd;transform:scaleX(1.0652);transform-origin:left">Account:</div>
<div style="position:absolute;left:687px;top:170px;width:202px;height:38px;box-sizing:border-box;border:1px solid #8a8a8a;border-radius:3px;background:#161616"></div>
<div class="t" style="left:701px;top:177.60px;font:400 15.55px/20.21px 'Liberation Sans', sans-serif;color:#ffffff;transform:scaleX(0.9799);transform-origin:left">All Accounts</div>
<svg style="position:absolute;left:863px;top:184px;" width="15" height="10" viewBox="0 0 15 10" fill="none" stroke-linecap="round" stroke-linejoin="round"><path d="M1 1.5 L7.5 8 L14 1.5" stroke="#cfcfcf" stroke-width="1.0"/></svg>
<div class="t" style="left:909px;top:179.71px;font:400 14.24px/18.51px 'Liberation Sans', sans-serif;color:#bdbdbd;transform:scaleX(1.0423);transform-origin:left">Type:</div>
<div style="position:absolute;left:954px;top:170px;width:142px;height:38px;box-sizing:border-box;border:1px solid #8a8a8a;border-radius:3px;background:#161616"></div>
<div class="t" style="left:968.2px;top:177.60px;font:400 15.55px/20.21px 'Liberation Sans', sans-serif;color:#ffffff;transform:scaleX(0.9259);transform-origin:left">All</div>
<svg style="position:absolute;left:1070px;top:184px;" width="15" height="10" viewBox="0 0 15 10" fill="none" stroke-linecap="round" stroke-linejoin="round"><path d="M1 1.5 L7.5 8 L14 1.5" stroke="#cfcfcf" stroke-width="1.0"/></svg>
<div class="t" style="left:1116px;top:179.71px;font:400 14.24px/18.51px 'Liberation Sans', sans-serif;color:#bdbdbd;transform:scaleX(1.0295);transform-origin:left">Tag:</div>
<div style="position:absolute;left:1153px;top:170px;width:179px;height:38px;box-sizing:border-box;border:1px solid #8a8a8a;border-radius:3px;background:#161616"></div>
<div class="t" style="left:1167.8px;top:177.60px;font:400 15.55px/20.21px 'Liberation Sans', sans-serif;color:#ffffff;transform:scaleX(0.9602);transform-origin:left">All Tags</div>
<svg style="position:absolute;left:1306px;top:184px;" width="15" height="10" viewBox="0 0 15 10" fill="none" stroke-linecap="round" stroke-linejoin="round"><path d="M1 1.5 L7.5 8 L14 1.5" stroke="#cfcfcf" stroke-width="1.0"/></svg>
<div class="t" style="left:330px;top:227.58px;font:400 30.52px/39.68px 'Liberation Sans', sans-serif;color:#ffffff;transform:scaleX(0.9090);transform-origin:left">Data</div>
<div class="t" style="left:421.1px;top:227.58px;font:400 30.52px/39.68px 'Liberation Sans', sans-serif;color:#9a9a9a;transform:scaleX(0.9279);transform-origin:left">Graph</div>
<div style="position:absolute;left:328px;top:271px;width:63px;height:3px;background:#0a84e8;border-radius:2px"></div>
<div style="position:absolute;left:328px;top:277px;width:1706px;height:934px;background:#333333"></div>
<div style="position:absolute;left:765px;top:296px;width:831px;height:877px;box-sizing:border-box;background:#242424;border:1px solid #3e3e3e;border-radius:3px;box-shadow:0 2px 12px rgba(0,0,0,0.25)"></div>
<div class="t" style="left:475.4000000000001px;width:2000px;text-align:center;top:416.87px;font:700 29.22px/37.99px 'Liberation Sans', sans-serif;color:#ffffff;transform:scaleX(0.9114);transform-origin:center">Income vs Expenses</div>
<div class="t" style="left:475.5999999999999px;width:2000px;text-align:center;top:454.50px;font:400 18.46px/24.0px 'Liberation Sans', sans-serif;color:#cfcfcf;-webkit-text-stroke:0.2px #cfcfcf;transform:scaleX(1.0439);transform-origin:center">Matt Carlucci</div>
<div class="t" style="left:474.9000000000001px;width:2000px;text-align:center;top:480.30px;font:400 18.46px/24.0px 'Liberation Sans', sans-serif;color:#cfcfcf;-webkit-text-stroke:0.2px #cfcfcf;transform:scaleX(1.0131);transform-origin:center">March 1, 2026 - March 14, 2026</div>
<div style="position:absolute;left:1016px;top:532px;width:918px;height:46px;background:#333333;border-radius:4px 4px 0 0"></div>
<div class="t" style="left:1035px;top:543.41px;font:700 18.75px/24.38px 'Liberation Sans', sans-serif;color:#cfcfcf;transform:scaleX(0.9674);transform-origin:left">Month</div>
<div class="t" style="right:667.8px;top:543.41px;font:700 18.75px/24.38px 'Liberation Sans', sans-serif;color:#cfcfcf;transform:scaleX(0.9550);transform-origin:right">Income</div>
<div class="t" style="right:502px;top:543.41px;font:700 18.75px/24.38px 'Liberation Sans', sans-serif;color:#cfcfcf;transform:scaleX(0.9410);transform-origin:right">Expenses</div>
<div class="t" style="right:338.20000000000005px;top:543.41px;font:700 18.75px/24.38px 'Liberation Sans', sans-serif;color:#cfcfcf;transform:scaleX(0.9696);transform-origin:right">Net</div>
<div class="t" style="right:159.79999999999995px;top:543.41px;font:700 18.75px/24.38px 'Liberation Sans', sans-serif;color:#cfcfcf;transform:scaleX(0.9400);transform-origin:right">Savings Rate</div>
<div class="t" style="left:1036.3px;top:590.58px;font:400 20.49px/26.64px 'Liberation Sans', sans-serif;color:#f0f0f0;-webkit-text-stroke:0.25px #f0f0f0;transform:scaleX(1.0099);transform-origin:left">Mar 2026</div>
<div class="t" style="right:667.2px;top:591.85px;font:400 21.56px/28.03px 'Liberation Mono', monospace;color:#18cc16;-webkit-text-stroke:0.3px #18cc16;transform:scaleX(0.9005);transform-origin:right">$5,075.00</div>
<div class="t" style="right:501.79999999999995px;top:591.85px;font:400 21.56px/28.03px 'Liberation Mono', monospace;color:#f43b1c;-webkit-text-stroke:0.3px #f43b1c;transform:scaleX(0.8988);transform-origin:right">$4,929.45</div>
<div class="t" style="right:337.4000000000001px;top:591.85px;font:400 21.56px/28.03px 'Liberation Mono', monospace;color:#18cc16;-webkit-text-stroke:0.3px #18cc16;transform:scaleX(0.9048);transform-origin:right">+$145.55</div>
<div class="t" style="right:160.20000000000005px;top:591.85px;font:400 21.56px/28.03px 'Liberation Mono', monospace;color:#dedede;-webkit-text-stroke:0.3px #dedede;transform:scaleX(0.9085);transform-origin:right">2.9%</div>
<div style="position:absolute;left:1016px;top:630px;width:918px;height:1px;background:#363636"></div>
<div style="position:absolute;left:1016px;top:645px;width:918px;height:2px;background:#f0f0f0"></div>
<div class="t" style="left:1034.6px;top:660.91px;font:700 20.06px/26.08px 'Liberation Sans', sans-serif;color:#ffffff;transform:scaleX(0.9651);transform-origin:left">TOTAL</div>
<div class="t" style="right:667px;top:661.14px;font:700 22.77px/29.6px 'Liberation Mono', monospace;color:#18cc16;transform:scaleX(0.8506);transform-origin:right">$5,075.00</div>
<div class="t" style="right:501.79999999999995px;top:661.14px;font:700 22.77px/29.6px 'Liberation Mono', monospace;color:#f43b1c;transform:scaleX(0.8490);transform-origin:right">$4,929.45</div>
<div class="t" style="right:337.4000000000001px;top:661.14px;font:700 22.77px/29.6px 'Liberation Mono', monospace;color:#18cc16;transform:scaleX(0.8555);transform-origin:right">+$145.55</div>
<div style="position:absolute;left:1016px;top:703px;width:918px;height:2px;background:#f0f0f0"></div>
<div style="position:absolute;left:899px;top:1253px;width:8px;height:8px;background:#22c55e;border-radius:50%"></div>
<div class="t" style="left:913.1px;top:1248.37px;font:400 13.37px/17.38px 'Liberation Sans', sans-serif;color:#9a9a9a;transform:scaleX(0.9178);transform-origin:left">AI:</div>
<div class="t" style="left:935.7px;top:1248.47px;font:700 13.37px/17.38px 'Liberation Sans', sans-serif;color:#e0e0e0;transform:scaleX(0.9084);transform-origin:left">GPU</div>
<div class="t" style="left:982.8px;top:1248.37px;font:400 13.37px/17.38px 'Liberation Sans', sans-serif;color:#9a9a9a;transform:scaleX(1.0122);transform-origin:left">Model:</div>
<div class="t" style="left:1029.3px;top:1248.37px;font:400 13.37px/17.38px 'Liberation Sans', sans-serif;color:#1e88e5;transform:scaleX(1.0755);transform-origin:left">llama-3B</div>
<div style="position:absolute;left:1108px;top:1250px;width:1px;height:15px;background:#3c3c3c"></div>
<div style="position:absolute;left:1133px;top:1253px;width:8px;height:8px;background:#22c55e;border-radius:50%"></div>
<div class="t" style="left:1145.8px;top:1248.37px;font:400 13.37px/17.38px 'Liberation Sans', sans-serif;color:#9a9a9a;transform:scaleX(0.9164);transform-origin:left">PDF</div>
<div style="position:absolute;left:1196px;top:1250px;width:1px;height:15px;background:#3c3c3c"></div>
<div style="position:absolute;left:1217px;top:1253px;width:8px;height:8px;background:#22c55e;border-radius:50%"></div>
<div class="t" style="left:1229.5px;top:1248.37px;font:400 13.37px/17.38px 'Liberation Sans', sans-serif;color:#9a9a9a;transform:scaleX(0.9875);transform-origin:left">Ollama</div>
<div style="position:absolute;left:1286px;top:1253px;width:8px;height:8px;background:#22c55e;border-radius:50%"></div>
<div class="t" style="left:1299px;top:1248.37px;font:400 13.37px/17.38px 'Liberation Sans', sans-serif;color:#9a9a9a;transform:scaleX(1.0037);transform-origin:left">Claude</div>
<div style="position:absolute;left:1358.5px;top:1253px;width:8px;height:8px;background:#22c55e;border-radius:50%"></div>
<div class="t" style="left:1371.3px;top:1248.37px;font:400 13.37px/17.38px 'Liberation Sans', sans-serif;color:#9a9a9a;transform:scaleX(0.9852);transform-origin:left">Gemini</div>
<div style="position:absolute;left:1429.5px;top:1253px;width:8px;height:8px;background:#22c55e;border-radius:50%"></div>
<div class="t" style="left:1442.4px;top:1248.37px;font:400 13.37px/17.38px 'Liberation Sans', sans-serif;color:#9a9a9a;transform:scaleX(0.9887);transform-origin:left">OpenAI</div>
<div style="position:absolute;left:1508px;top:1250px;width:1px;height:15px;background:#3c3c3c"></div>
<svg style="position:absolute;left:1529px;top:1250px;" width="13" height="14" viewBox="0 0 13 14" fill="none" stroke-linecap="round" stroke-linejoin="round"><path d="M11 7 a4.5 4.5 0 0 1 -8 3" stroke="#8a8a8a" stroke-width="1.2"/><path d="M2 7 a4.5 4.5 0 0 1 8 -3" stroke="#8a8a8a" stroke-width="1.2"/><path d="M10 1.5 v2.5 h-2.5 M3 12.5 v-2.5 h2.5" stroke="#8a8a8a" stroke-width="1.2"/></svg>
<div class="t" style="left:1550px;top:1248.37px;font:400 13.37px/17.38px 'Liberation Sans', sans-serif;color:#9a9a9a;transform:scaleX(1.1371);transform-origin:left">Last sync: 3/14/2026 2:29 PM</div>
<div style="position:absolute;left:1773px;top:1250px;width:1px;height:15px;background:#3c3c3c"></div>
<div class="t" style="left:1793.6px;top:1248.37px;font:400 13.37px/17.38px 'Liberation Sans', sans-serif;color:#9a9a9a;transform:scaleX(1.1062);transform-origin:left">OpenLedger v0.1.0.2118-beta</div>
<div style="position:absolute;left:2011px;top:1250px;width:1px;height:15px;background:#3c3c3c"></div>
<svg style="position:absolute;left:2037px;top:1249px;" width="15" height="15" viewBox="0 0 15 15" fill="none" stroke-linecap="round" stroke-linejoin="round"><rect x="1.5" y="5" width="12" height="9" rx="1.5" stroke="#8a8a8a" stroke-width="1.2"/><path d="M4.5 5 V3.5 a3 3 0 0 1 6 0 V5" stroke="#8a8a8a" stroke-width="1.2"/><circle cx="7.5" cy="9.5" r="0.8" fill="#8a8a8a"/></svg>
</body></html>
